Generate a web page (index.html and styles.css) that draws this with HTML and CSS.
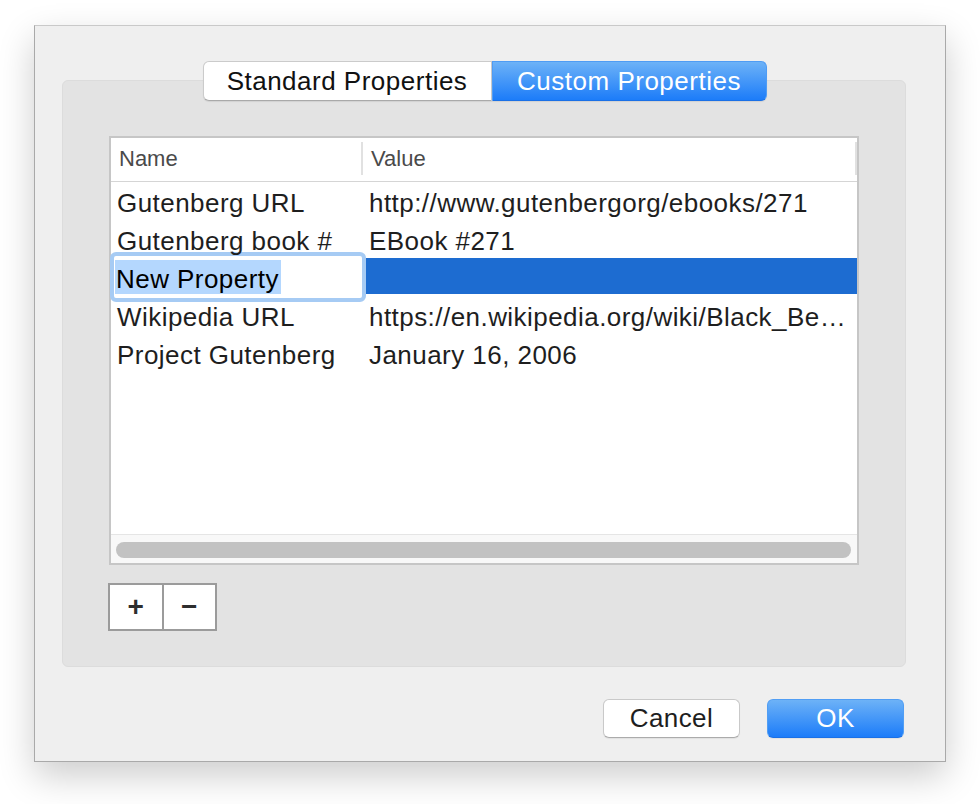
FILE: index.html
```html
<!DOCTYPE html>
<html lang="en">
<head>
  <meta charset="UTF-8">
  <meta name="viewport" content="width=device-width, initial-scale=1.0">
  <title>Document Properties</title>
  <link rel="stylesheet" href="styles.css">
</head>
<body>
  <div class="dialog">
    <div class="tabs">
      <button class="tab">Standard Properties</button>
      <button class="tab active">Custom Properties</button>
    </div>

    <div class="group">
      <div class="table">
        <div class="thead">
          <div class="th name">Name</div>
          <div class="th value">Value</div>
        </div>
        <div class="tbody">
          <div class="row">
            <div class="cell">Gutenberg URL</div>
            <div class="cell">http://www.gutenbergorg/ebooks/271</div>
          </div>
          <div class="row">
            <div class="cell">Gutenberg book #</div>
            <div class="cell">EBook #271</div>
          </div>
          <div class="row selected">
            <div class="cell"></div>
            <div class="cell"></div>
            <div class="editor"><span class="picked">New Property</span></div>
          </div>
          <div class="row">
            <div class="cell">Wikipedia URL</div>
            <div class="cell">https://en.wikipedia.org/wiki/Black_Be…</div>
          </div>
          <div class="row">
            <div class="cell">Project Gutenberg</div>
            <div class="cell">January 16, 2006</div>
          </div>
        </div>
        <div class="hscroll"><div class="thumb"></div></div>
      </div>

      <div class="addremove">
        <button>+</button>
        <button>−</button>
      </div>
    </div>

    <div class="actions">
      <button class="btn">Cancel</button>
      <button class="btn primary">OK</button>
    </div>
  </div>
</body>
</html>
```

FILE: styles.css
```css
* {
  box-sizing: border-box;
}

html {
  background: #ffffff;
}

body {
  margin: 0;
  min-height: 804px;
  padding: 25px 0 0 34px;
  font-family: "Liberation Sans", Arial, sans-serif;
  color: #1e1e1e;
}

button {
  font-family: inherit;
}

.dialog {
  width: 912px;
  height: 737px;
  padding: 35px 39px 0 27px;
  background: #efefef;
  border: 1px solid #a9a9a9;
  border-top-color: #c9c9c9;
  box-shadow: 0 14px 34px rgba(0, 0, 0, 0.2);
}

.tabs {
  position: relative;
  z-index: 1;
  display: flex;
  justify-content: center;
  padding-left: 1px;
}

.tab {
  width: 289px;
  height: 40px;
  padding: 0;
  font-size: 26px;
  letter-spacing: 0.5px;
  line-height: 38px;
  color: #111;
  background: #ffffff;
  border: 1px solid #cbcbcb;
  border-bottom-color: #a9a9a9;
  border-radius: 6px 0 0 6px;
  box-shadow: 0 1px 1px rgba(0, 0, 0, 0.08);
}

.tab.active {
  width: 275px;
  color: #ffffff;
  background: linear-gradient(#6db2f7, #1c7cf9);
  border-color: #4f9cf4;
  border-bottom-color: #1a70e6;
  border-radius: 0 6px 6px 0;
}

.group {
  height: 587px;
  margin-top: -21px;
  padding: 55px 0 0 46px;
  background: #e3e3e3;
  border: 1px solid #dcdcdc;
  border-radius: 6px;
}

.table {
  display: flex;
  flex-direction: column;
  width: 750px;
  height: 429px;
  background: #ffffff;
  border: 2px solid #c6c6c6;
}

.thead {
  display: flex;
  height: 44px;
  border-bottom: 1px solid #d5d5d5;
}

.th {
  margin: 4px 0 6px;
  padding-left: 8px;
  font-size: 22px;
  line-height: 34px;
  color: #4a4a4a;
}

.th.name {
  width: 252px;
  border-right: 2px solid #e1e1e1;
}

.th.value {
  flex: 1;
  border-right: 2px solid #e1e1e1;
}

.tbody {
  flex: 1;
}

.row {
  position: relative;
  display: grid;
  grid-template-columns: 252px 1fr;
  height: 36px;
  margin-bottom: 2px;
  font-size: 26px;
  letter-spacing: 0.45px;
  line-height: 42px;
}

.cell {
  position: relative;
  z-index: 1;
  padding: 0 6px;
  overflow: hidden;
  white-space: nowrap;
  text-overflow: ellipsis;
}

.row.selected {
  background: #1d6cd1;
}

/* in-place editor for the name cell */
.editor {
  position: absolute;
  z-index: 0;
  left: -1px;
  top: -6px;
  width: 256px;
  height: 50px;
  padding: 4px 0 0 1px;
  line-height: 0;
  background: #ffffff;
  border: 4px solid #a6cbf4;
  border-radius: 6px;
}

.picked {
  display: inline-block;
  vertical-align: top;
  height: 34px;
  padding: 0 2px 0 1px;
  line-height: 38px;
  background: #b4d7fe;
  color: #000;
}

.hscroll {
  height: 29px;
  padding: 7px 6px 0 5px;
  background: #f8f8f8;
  border-top: 1px solid #e5e5e5;
}

.thumb {
  height: 16px;
  background: #c2c2c2;
  border-radius: 8px;
}

.addremove {
  display: flex;
  width: 109px;
  height: 48px;
  margin: 18px 0 0 -1px;
  background: #ffffff;
  border: 2px solid #9b9b9b;
}

.addremove button {
  flex: 1;
  padding: 0;
  font-size: 28px;
  font-weight: bold;
  line-height: 44px;
  color: #2e2e2e;
  background: transparent;
  border: none;
}

.addremove button + button {
  border-left: 2px solid #9b9b9b;
}

.actions {
  display: flex;
  justify-content: flex-end;
  gap: 27px;
  margin-top: 32px;
  padding-right: 2px;
}

.btn {
  width: 137px;
  height: 39px;
  padding: 0;
  font-size: 26px;
  letter-spacing: 0.4px;
  line-height: 37px;
  color: #1e1e1e;
  background: #ffffff;
  border: 1px solid #c9c9c9;
  border-bottom-color: #ababab;
  border-radius: 6px;
  box-shadow: 0 1px 1px rgba(0, 0, 0, 0.06);
}

.btn.primary {
  color: #ffffff;
  background: linear-gradient(#6db2f7, #1c7cf9);
  border-color: #519ef4;
  border-bottom-color: #1a70e6;
}
```
